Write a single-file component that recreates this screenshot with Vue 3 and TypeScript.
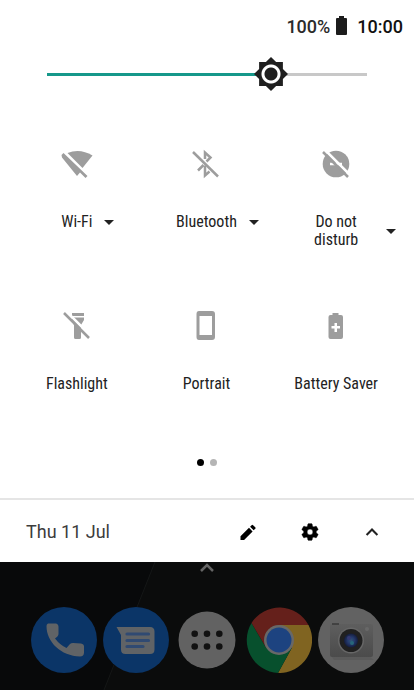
<script setup lang="ts">
import { computed, ref } from 'vue'

interface Tile {
  id: string
  label: string
  expandable: boolean
}

const brightness = ref(70)
const sliderStyle = computed(() => ({ '--level': `${brightness.value}%` }))

const tiles: Tile[] = [
  { id: 'wifi', label: 'Wi-Fi', expandable: true },
  { id: 'bluetooth', label: 'Bluetooth', expandable: true },
  { id: 'dnd', label: 'Do not disturb', expandable: true },
  { id: 'flashlight', label: 'Flashlight', expandable: false },
  { id: 'portrait', label: 'Portrait', expandable: false },
  { id: 'battery', label: 'Battery Saver', expandable: false },
]
</script>

<template>
  <div class="screen">
    <main class="shade">
      <header class="status">
        <span class="percent">100%</span>
        <svg class="battery" viewBox="0 0 11 19" aria-hidden="true">
          <path d="M3 0h5v2h2q1 0 1 1v15q0 1-1 1H1q-1 0-1-1V3q0-1 1-1h2z" />
        </svg>
        <time class="clock">10:00</time>
      </header>

      <div class="brightness">
        <input
          v-model.number="brightness"
          class="slider"
          type="range"
          min="0"
          max="100"
          aria-label="Brightness"
          :style="sliderStyle"
        />
      </div>

      <section class="tiles">
        <button v-for="tile in tiles" :key="tile.id" type="button" class="tile">
          <svg class="tile-icon" viewBox="0 0 32 32" aria-hidden="true">
            <g v-if="tile.id === 'wifi'">
              <path d="M6.500 5Q19 0 31.500 7.500L21.500 20z" />
              <path d="M.500 7L2.500 5L26.500 28L24.500 30L19 24.500L16 28L1 9.500z" />
            </g>
            <g v-else-if="tile.id === 'bluetooth'">
              <path d="M15 11V4.500L20.500 9.500L16.500 13.500M8 22.500L13.500 17M15 17.500V27.500L19.500 23.500" class="line" />
              <path d="M3 4L28 28.500" class="line" />
            </g>
            <g v-else-if="tile.id === 'dnd'">
              <circle cx="16" cy="16" r="13.300" />
              <path d="M10 16H22" class="cut" />
              <path d="M5 2L31 28" class="cut" />
              <path d="M3 4L28 29" class="line" />
            </g>
            <g v-else-if="tile.id === 'flashlight'">
              <path d="M11 3H23V6H11zM11 7.500H23V10L20 15V27.500Q20 29 18.500 29H14.500Q13 29 13 27.500V15L11 11z" />
              <path d="M4 0L31 27" class="cut" />
              <path d="M3 3L28 28" class="line" />
            </g>
            <path
              v-else-if="tile.id === 'portrait'"
              fill-rule="evenodd"
              d="M9 1H22Q25 1 25 4V27Q25 30 22 30H9Q6.500 30 6.500 27V4Q6.500 1 9 1zM9.500 6V25H22V6z"
            />
            <path
              v-else
              fill-rule="evenodd"
              d="M12.500 3H18.500V5H21Q23 5 23 7V27Q23 29 21 29H10.500Q8.500 29 8.500 27V7Q8.500 5 10.500 5H12.500zM14.500 13V16H11.500V18.500H14.500V22H17V18.500H20V16H17V13z"
            />
          </svg>
          <span class="tile-caption">
            <span class="tile-label" :class="{ wrapping: tile.expandable }">{{ tile.label }}</span>
            <svg v-if="tile.expandable" class="caret" viewBox="0 0 10 5" aria-hidden="true">
              <path d="M0 0H10L5 5z" />
            </svg>
          </span>
        </button>
      </section>

      <div class="pager" aria-hidden="true">
        <span class="dot current"></span>
        <span class="dot"></span>
      </div>

      <footer class="footer">
        <span class="date">Thu 11 Jul</span>
        <button type="button" class="action" aria-label="Edit">
          <svg viewBox="0 0 24 24">
            <path d="M3 17.200V21.500h4.300L17.500 11.300 13.200 7zM20.700 8.200a1.300 1.300 0 0 0 0-1.800l-2.600-2.600a1.300 1.300 0 0 0-1.800 0L14.500 5.700 18.800 10z" />
          </svg>
        </button>
        <button type="button" class="action" aria-label="Settings">
          <svg viewBox="0 0 24 24">
            <path d="M19.430 12.980c.040-.320.070-.640.070-.980s-.030-.660-.070-.980l2.110-1.650c.190-.150.240-.420.120-.640l-2-3.460c-.120-.220-.390-.300-.610-.220l-2.490 1c-.520-.400-1.080-.730-1.690-.980l-.380-2.650C14.460 2.180 14.250 2 14 2h-4c-.250 0-.460.180-.490.420l-.380 2.650c-.610.250-1.170.590-1.690.980l-2.490-1c-.230-.090-.490 0-.610.220l-2 3.460c-.130.220-.070.490.120.640l2.110 1.650c-.040.320-.070.650-.070.980s.030.660.070.980l-2.110 1.650c-.190.150-.240.420-.120.640l2 3.460c.120.220.390.300.610.220l2.490-1c.520.400 1.080.730 1.690.980l.380 2.650c.030.240.240.420.490.420h4c.250 0 .460-.180.490-.420l.380-2.650c.610-.250 1.170-.590 1.690-.980l2.490 1c.230.090.490 0 .610-.220l2-3.460c.120-.220.070-.490-.120-.640zM12 15.500a3.500 3.500 0 1 1 0-7 3.500 3.500 0 0 1 0 7z" stroke="#000" stroke-width=".600" />
          </svg>
        </button>
        <button type="button" class="action" aria-label="Collapse">
          <svg viewBox="0 0 24 24"><path d="M5.500 15.500L12 9l6.500 6.500" class="chevron" /></svg>
        </button>
      </footer>
    </main>

    <section class="home">
      <svg class="wallpaper" viewBox="0 0 414 128" preserveAspectRatio="none" aria-hidden="true">
        <path d="M0 0H155L104 128H0z" fill="#08090a" />
        <path d="M155 0L104 128" stroke="#151717" fill="none" />
      </svg>
      <svg class="drawer-hint" viewBox="0 0 16 10" aria-hidden="true">
        <path d="M2 8L8 2l6 6" fill="none" stroke="#656565" stroke-width="2.500" />
      </svg>
      <nav class="dock">
        <button type="button" class="app" aria-label="Phone">
          <svg viewBox="0 0 66 66">
            <circle cx="33" cy="33" r="33" fill="#0b3567" />
            <path d="M17 16.500H25Q27.500 17 27.500 20V27Q27.500 29 24 31.500Q29 38 35.500 41L39 37Q40 36 42 36L50 36.500Q53 37 53 39.500V45.500Q53 49.500 49 49.500C30 49 15.500 35 15.500 19Q15.500 17 17 16.500z" fill="#606366" />
          </svg>
        </button>
        <button type="button" class="app" aria-label="Messages">
          <svg viewBox="0 0 66 66">
            <circle cx="33" cy="33" r="33" fill="#0b3567" />
            <path d="M13.500 20H47Q51.500 20 51.500 24.500V42.500Q51.500 47 47 47H22.500Q18 47 18 42.500V28z" fill="#606366" />
            <path d="M24 27H45.500M24 33.500H45.500M24 39.500H40" stroke="#304a72" stroke-width="3.200" stroke-linecap="round" />
          </svg>
        </button>
        <button type="button" class="app" aria-label="All apps">
          <svg viewBox="0 0 66 66">
            <circle cx="33" cy="33" r="28.500" fill="#626262" />
            <g fill="#111">
              <circle v-for="n in 6" :key="n" :cx="20.700 + ((n - 1) % 3) * 12.300" :cy="n > 3 ? 39.500 : 26.700" r="3.300" />
            </g>
          </svg>
        </button>
        <button type="button" class="app" aria-label="Chrome">
          <svg viewBox="0 0 66 66">
            <path d="M33 18H62.500A33 33 0 0 1 32 66L46 40.500z" fill="#806421" />
            <path d="M5.500 16L20 40.500Q30 50 46 40.500L32 66A33 33 0 0 1 5.500 16z" fill="#07502d" />
            <path d="M5.500 16L20 40.500L33 18H62.500A33 33 0 0 0 5.500 16z" fill="#65201b" />
            <circle cx="33" cy="33" r="15" fill="#686868" />
            <circle cx="33" cy="33" r="12.500" fill="#1d4380" />
          </svg>
        </button>
        <button type="button" class="app" aria-label="Camera">
          <svg viewBox="0 0 66 66">
            <defs>
              <linearGradient id="camera-body" x1="0" y1="0" x2="0" y2="1">
                <stop offset="0" stop-color="#5e5e5e" />
                <stop offset="1" stop-color="#4b4b4b" />
              </linearGradient>
              <radialGradient id="camera-lens">
                <stop offset="0" stop-color="#315577" />
                <stop offset=".5" stop-color="#24396c" />
                <stop offset="1" stop-color="#151d3c" />
              </radialGradient>
            </defs>
            <circle cx="33" cy="33" r="33" fill="#626262" />
            <path d="M14 50H52L56 53H16z" fill="#5b5b5b" />
            <rect x="12" y="17" width="43" height="33" rx="2" fill="url(#camera-body)" />
            <path d="M14 17H21" stroke="#393939" stroke-width="1.500" />
            <circle cx="49" cy="22" r="2" fill="#686868" />
            <circle cx="33" cy="33.500" r="13" fill="#676767" />
            <circle cx="33" cy="33.500" r="11.500" fill="#202020" />
            <circle cx="33" cy="33.500" r="7" fill="url(#camera-lens)" />
            <circle cx="31" cy="31" r="2" fill="#343971" />
            <circle cx="34" cy="36" r="2" fill="#27677a" />
          </svg>
        </button>
      </nav>
    </section>
  </div>
</template>

<style>
body {
  margin: 0;
  background: #0b0c0c;
}
</style>

<style scoped>
.screen {
  display: flex;
  flex-direction: column;
  min-height: 100vh;
  font-family: Roboto, 'Liberation Sans', sans-serif;
  color: #222;
}

button {
  padding: 0;
  border: 0;
  background: none;
  color: inherit;
  font: inherit;
}

svg {
  display: block;
}

.shade {
  background: #fff;
}

.status {
  display: flex;
  align-items: center;
  justify-content: flex-end;
  padding: 15px 11px 0 0;
  font-size: 18px;
  line-height: 24px;
  font-weight: 500;
}

.battery {
  width: 11px;
  height: 19px;
  margin: 0 10px 4px 6px;
  fill: #1c1c1c;
}

.percent {
  color: #2b2b2b;
}

.clock {
  color: #111;
}

.brightness {
  display: flex;
  padding: 18px 30px 0;
}

.slider {
  flex: 1;
  min-width: 0;
  height: 34px;
  margin: 0;
  appearance: none;
  background: linear-gradient(to right, #16988a var(--level), #c8c8c8 var(--level)) center / calc(100% - 34px) 3px no-repeat;
}

.slider::-webkit-slider-thumb {
  appearance: none;
  width: 34px;
  height: 34px;
  background: radial-gradient(circle, #1f1f1f 0 6px, #fff 7px 9px, #1f1f1f 10px);
  clip-path: polygon(50% 0, 65% 15%, 85% 15%, 85% 35%, 100% 50%, 85% 65%, 85% 85%, 65% 85%, 50% 100%, 35% 85%, 15% 85%, 15% 65%, 0 50%, 15% 35%, 15% 15%, 35% 15%);
}

.tiles {
  display: grid;
  grid-template-columns: repeat(3, 1fr);
  grid-auto-rows: 102px;
  row-gap: 60px;
  padding: 57px 13px 0 12px;
}

.tile {
  display: flex;
  flex-direction: column;
  align-items: center;
  gap: 33px;
}

.tile-icon {
  width: 32px;
  height: 32px;
  fill: #9d9d9d;
}

.line {
  fill: none;
  stroke: #9d9d9d;
  stroke-width: 2.5;
}

.cut {
  fill: none;
  stroke: #fff;
  stroke-width: 2.5;
}

.tile-caption {
  display: grid;
  grid-template-columns: 1fr auto 1fr;
  align-items: center;
  width: 100%;
}

.tile-label {
  grid-column: 2;
  font-family: 'Roboto Condensed', Roboto, 'Liberation Sans', sans-serif;
  font-size: 16px;
  line-height: 18px;
  white-space: nowrap;
}

.wrapping {
  max-width: 76px;
  white-space: normal;
}

.caret {
  width: 10px;
  height: 5px;
  margin-left: 12px;
  fill: #222;
}

.pager {
  display: flex;
  justify-content: center;
  gap: 6px;
  padding: 47px 0 32px;
}

.dot {
  width: 7px;
  height: 7px;
  border-radius: 50%;
  background: #b5b5b5;
}

.current {
  background: #000;
}

.footer {
  display: flex;
  align-items: center;
  gap: 38px;
  padding: 20px 30px 18px 26px;
  border-top: 2px solid #e5e5e5;
}

.date {
  flex: 1;
  color: #3c3c3c;
  font-size: 18px;
  line-height: 24px;
}

.action {
  width: 24px;
  height: 24px;
}

.action svg {
  width: 20px;
  height: 20px;
  margin: 0 auto;
  fill: #000;
}

.action .chevron {
  fill: none;
  stroke: #222;
  stroke-width: 2.5;
}

.home {
  display: flex;
  flex: 1;
  flex-direction: column;
  align-items: center;
  position: relative;
  background: #0b0c0c;
}

.wallpaper {
  position: absolute;
  inset: 0;
  width: 100%;
  height: 100%;
}

.drawer-hint {
  position: relative;
  width: 16px;
  height: 10px;
  margin-top: 1px;
}

.dock {
  position: relative;
  display: grid;
  grid-template-columns: repeat(5, 1fr);
  justify-items: center;
  box-sizing: border-box;
  width: 100%;
  padding: 34px 27px 16px 28px;
}

.app,
.app svg {
  width: 66px;
  height: 66px;
}
</style>
